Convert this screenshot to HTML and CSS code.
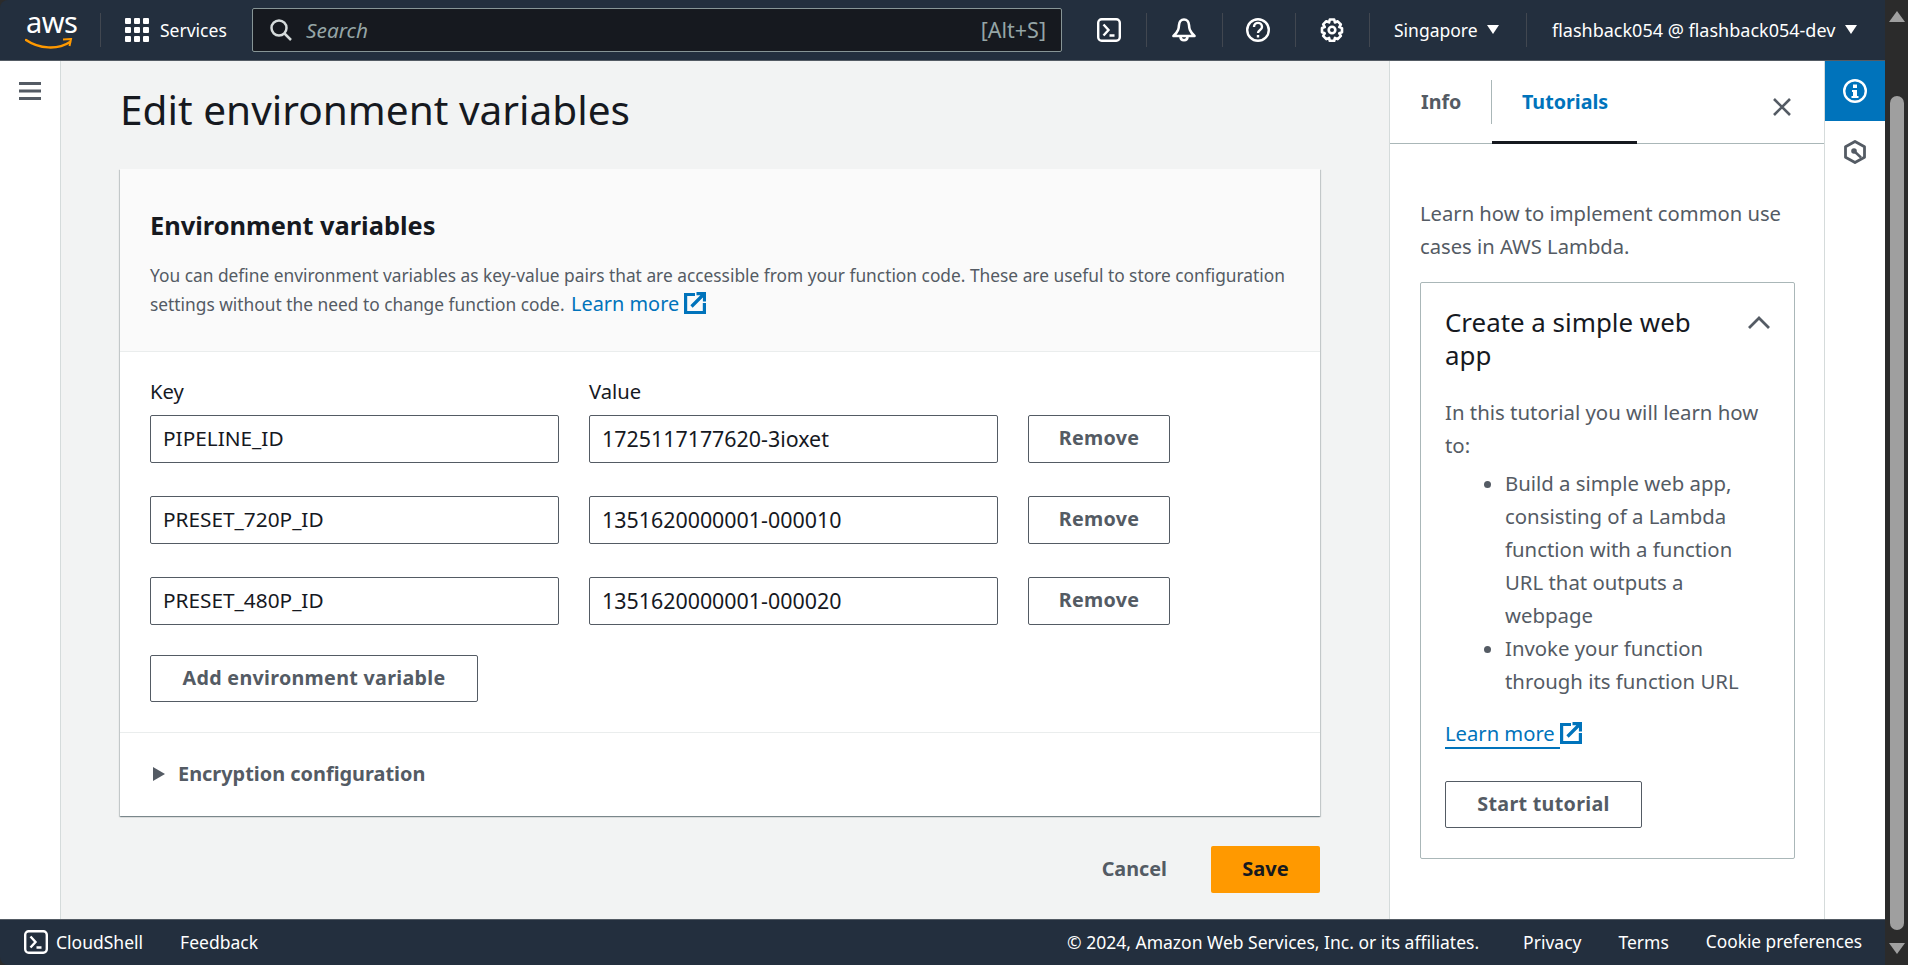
FILE: index.html
```html
<!DOCTYPE html>
<html lang="en">
<head>
<meta charset="utf-8">
<title>Edit environment variables</title>
<link rel="stylesheet" href="styles.css">
</head>
<body>
<div class="window">
  <div class="app">
    <header class="topbar">
      <div class="logo">
        <span class="logo-text">aws</span>
        <svg class="logo-smile" viewBox="0 0 48 14" width="48" height="14"><path d="M1 2c13 9 32 10 44 2" fill="none" stroke="#f90" stroke-width="2.4" stroke-linecap="round"/><path d="M38 1.500l8-.5-1.500 7" fill="none" stroke="#f90" stroke-width="2"/></svg>
      </div>
      <span class="sep sep-logo"></span>
      <svg class="grid-icon" viewBox="0 0 24 24" width="24" height="24" fill="#fff"><rect x="0" y="0" width="6" height="6" rx="1"/><rect x="9" y="0" width="6" height="6" rx="1"/><rect x="18" y="0" width="6" height="6" rx="1"/><rect x="0" y="9" width="6" height="6" rx="1"/><rect x="9" y="9" width="6" height="6" rx="1"/><rect x="18" y="9" width="6" height="6" rx="1"/><rect x="0" y="18" width="6" height="6" rx="1"/><rect x="9" y="18" width="6" height="6" rx="1"/><rect x="18" y="18" width="6" height="6" rx="1"/></svg>
      <span class="top-text services">Services</span>
      <div class="search">
        <svg viewBox="0 0 22 22" width="22" height="22" fill="none" stroke="#d5dbdb" stroke-width="2.500"><circle cx="9" cy="9" r="7.500"/><path d="M14.500 14.500L21 21"/></svg>
        <span class="search-text">Search</span>
        <span class="search-key">[Alt+S]</span>
      </div>
      <svg class="ic ic-term" viewBox="0 0 24 24" width="24" height="24" fill="none" stroke="#fff" stroke-width="2.400"><rect x="1.200" y="1.200" width="21.600" height="21.600" rx="3.500"/><path d="M6.500 6.500l5 5.500-5 5.500M12.500 17.500h5"/></svg>
      <span class="sep sep-a"></span>
      <svg class="ic ic-bell" viewBox="0 0 24 24" width="24" height="24" fill="none" stroke="#fff" stroke-width="2.600" stroke-linejoin="round"><path d="M12 1.500c-3 0-4.800 2.500-5 5.500-.2 3.500-.5 6-5.500 11h21c-5-5-5.300-7.500-5.500-11-.2-3-2-5.500-5-5.500z"/><path d="M8.500 18.500c0 5 7 5 7 0"/></svg>
      <span class="sep sep-b"></span>
      <svg class="ic ic-help" viewBox="0 0 24 24" width="24" height="24" fill="none" stroke="#fff" stroke-width="2.400"><circle cx="12" cy="12" r="10.800"/><path d="M8 9c0-5.500 8-5.500 8 0 0 3-4 3-4 6"/><path d="M12 17v2.500"/></svg>
      <span class="sep sep-c"></span>
      <svg class="ic ic-gear" viewBox="0 0 24 24" width="24" height="24" fill="none" stroke="#fff" stroke-width="2.600" stroke-linejoin="round"><path d="M9.800 1.500h4.400l.7 3 2.800-1.200 3.100 3.200-1.500 2.600 2.700 1v4.200l-2.700 1 1.500 2.600-3.100 3.200-2.800-1.200-.7 3H9.800l-.7-3-2.800 1.200-3.100-3.200 1.500-2.600-2.700-1V10l2.700-1-1.500-2.600 3.100-3.200 2.800 1.200z"/><circle cx="12" cy="12" r="3.300"/></svg>
      <span class="sep sep-d"></span>
      <span class="top-text region">Singapore</span>
      <span class="caret caret-region"></span>
      <span class="sep sep-e"></span>
      <span class="top-text account">flashback054 @ flashback054-dev</span>
      <span class="caret caret-account"></span>
    </header>

    <div class="middle">
      <nav class="leftnav">
        <svg viewBox="0 0 22 18" width="22" height="18" fill="#545b64"><rect width="22" height="3"/><rect y="7.500" width="22" height="3"/><rect y="15" width="22" height="3"/></svg>
      </nav>

      <main class="main">
        <h1 class="page-title">Edit environment variables</h1>
        <section class="card">
          <div class="card-head">
            <h2 class="card-title">Environment variables</h2>
            <p class="card-desc">You can define environment variables as key-value pairs that are accessible from your function code. These are useful to store configuration settings without the need to change function code. <a class="link link-big">Learn more <svg class="ext" viewBox="0 0 22 22" width="22" height="22" fill="none" stroke="#0073bb" stroke-width="3.200"><path d="M11 2.500H1.600v18h18.800V11"/><path d="M7.500 14.500L19.500 2.500M12.500 1.600h8v8"/></svg></a></p>
          </div>
          <div class="card-body">
            <div class="kv-grid">
              <label class="kv-label">Key</label>
              <label class="kv-label">Value</label>
              <span></span>
              <input class="field" value="PIPELINE_ID">
              <input class="field field-num" value="1725117177620-3ioxet">
              <button class="btn">Remove</button>
              <input class="field" value="PRESET_720P_ID">
              <input class="field field-num" value="1351620000001-000010">
              <button class="btn">Remove</button>
              <input class="field" value="PRESET_480P_ID">
              <input class="field field-num" value="1351620000001-000020">
              <button class="btn">Remove</button>
            </div>
            <button class="btn btn-add">Add environment variable</button>
          </div>
          <div class="card-foot">
            <span class="tri"></span>
            <span class="enc">Encryption configuration</span>
          </div>
        </section>
        <div class="actions">
          <span class="cancel">Cancel</span>
          <button class="save">Save</button>
        </div>
      </main>

      <aside class="panel">
        <div class="panel-head">
          <span class="tab tab-info">Info</span>
          <span class="tab tab-tut">Tutorials</span>
          <svg class="close" viewBox="0 0 20 20" width="20" height="20" fill="none" stroke="#545b64" stroke-width="2.600"><path d="M2 2l16 16M18 2L2 18"/></svg>
        </div>
        <div class="panel-body">
          <p class="intro">Learn how to implement common use cases in AWS Lambda.</p>
          <div class="tut">
            <div class="tut-head">
              <h3 class="tut-title">Create a simple web app</h3>
              <svg class="chev" viewBox="0 0 24 14" width="24" height="14" fill="none" stroke="#545b64" stroke-width="2.800"><path d="M2 12L12 2l10 10"/></svg>
            </div>
            <p class="tut-text">In this tutorial you will learn how to:</p>
            <ul class="tut-list">
              <li>Build a simple web app, consisting of a Lambda function with a function URL that outputs a webpage</li>
              <li>Invoke your function through its function URL</li>
            </ul>
            <p class="tut-link"><a class="link link-under">Learn more </a><svg class="ext" viewBox="0 0 22 22" width="22" height="22" fill="none" stroke="#0073bb" stroke-width="3.200"><path d="M11 2.500H1.600v18h18.800V11"/><path d="M7.500 14.500L19.500 2.500M12.500 1.600h8v8"/></svg></p>
            <button class="btn btn-start">Start tutorial</button>
          </div>
        </div>
      </aside>

      <div class="rail">
        <div class="rail-active">
          <svg viewBox="0 0 24 24" width="24" height="24"><circle cx="12" cy="12" r="10.800" fill="none" stroke="#fff" stroke-width="2.400"/><rect x="10" y="5.500" width="4" height="3.500" fill="#fff"/><path d="M9 11h5v6h1.500v2h-7v-2H10v-4H9z" fill="#fff"/></svg>
        </div>
        <div class="rail-item">
          <svg viewBox="0 0 24 24" width="24" height="24" fill="none" stroke="#545b64" stroke-width="2.800" stroke-linejoin="round"><path d="M12 1.500l9.500 5.200v10.600L12 22.500l-9.500-5.200V6.700z"/><circle cx="11" cy="11" r="2.800" fill="#545b64" stroke="none"/><path d="M11 11l7 6.500" stroke-width="2.400"/></svg>
        </div>
      </div>
    </div>

    <footer class="bottombar">
      <svg class="cs-icon" viewBox="0 0 24 24" width="24" height="24" fill="none" stroke="#fff" stroke-width="2.400"><rect x="1.200" y="1.200" width="21.600" height="21.600" rx="3.500"/><path d="M6.500 6.500l5 5.500-5 5.500M12.500 17.500h5"/></svg>
      <span class="bot-text cs-text">CloudShell</span>
      <span class="bot-text feedback">Feedback</span>
      <span class="bot-text copy">© 2024, Amazon Web Services, Inc. or its affiliates.</span>
      <span class="bot-text privacy">Privacy</span>
      <span class="bot-text terms">Terms</span>
      <span class="bot-text cookie">Cookie preferences</span>
    </footer>
  </div>

  <div class="scrollbar">
    <span class="sb-up"></span>
    <span class="sb-thumb"></span>
    <span class="sb-down"></span>
  </div>
</div>
</body>
</html>
```
FILE: styles.css
```css
* { box-sizing: border-box; }
html, body { margin: 0; height: 100%; background: #2b2b2b; overflow: hidden; }
body { font-family: "Noto Sans", "Open Sans", sans-serif; color: #16191f; font-size: 18px; }
h1, h2, h3, p, ul { margin: 0; padding: 0; }

.window { display: flex; width: 1908px; height: 965px; }
.app { width: 1885px; display: flex; flex-direction: column; border-radius: 8px 0 0 8px; overflow: hidden; }

.topbar { height: 61px; flex: none; background: #232f3e; border-bottom: 1px solid #545b64; display: flex; align-items: center; color: #fff; padding: 0 0 1px 26px; }
.logo { width: 47px; height: 44px; position: relative; flex: none; }
.logo-text { display: block; font-size: 29px; line-height: 30px; text-align: center; letter-spacing: -.5px; color: #fff; margin-top: -1px; }
.logo-smile { position: absolute; left: -1px; bottom: 0; }
.sep { width: 1px; height: 34px; background: #414750; flex: none; }
.sep-logo { margin-left: 27px; }
.grid-icon { margin-left: 24px; flex: none; }
.top-text { font-size: 17.500px; white-space: nowrap; line-height: 24px; }
.services { margin-left: 11px; width: 67px; }
.search { margin-left: 25px; width: 810px; height: 44px; background: #16191f; border: 1px solid #879596; border-radius: 2px; display: flex; align-items: center; padding: 0 15px 0 17px; }
.search-text { margin-left: 14px; font-size: 20.800px; font-style: italic; color: #95a5a6; }
.search-key { margin-left: auto; font-size: 21.500px; color: #95a5a6; }
.ic { flex: none; }
.ic-term { margin-left: 35px; }
.sep-a { margin-left: 25px; }
.ic-bell { margin-left: 25px; }
.sep-b { margin-left: 26px; }
.ic-help { margin-left: 23px; }
.sep-c { margin-left: 25px; }
.ic-gear { margin-left: 24px; }
.sep-d { margin-left: 25px; }
.region { margin-left: 24px; width: 83px; }
.caret { width: 0; height: 0; border-left: 6px solid transparent; border-right: 6px solid transparent; border-top: 9px solid #fff; flex: none; }
.caret-region { margin-left: 10px; }
.sep-e { margin-left: 27px; }
.account { margin-left: 25px; width: 285px; font-size: 18px; }
.caret-account { margin-left: 8px; }

.middle { flex: 1; min-height: 0; display: flex; }
.leftnav { width: 61px; flex: none; background: #fff; border-right: 1px solid #d5dbdb; padding: 21px 0 0 19px; }
.leftnav svg { display: block; }

.main { width: 1328px; flex: none; background: #f2f3f3; padding: 24px 69px 0 59px; }
.page-title { font-size: 40.600px; font-weight: 400; line-height: 50px; white-space: nowrap; }
.card { margin-top: 34px; background: #fff; box-shadow: 0 1px 1px 0 rgba(0,28,36,.3), 1px 1px 1px 0 rgba(0,28,36,.15), -1px 1px 1px 0 rgba(0,28,36,.15); }
.card-head { background: #fafafa; border-bottom: 1px solid #eaeded; padding: 39px 30px 0; height: 183px; }
.card-title { font-size: 25.400px; font-weight: 700; line-height: 34px; }
.card-desc { margin-top: 19px; font-size: 17.330px; line-height: 29px; color: #545b64; }
.link { color: #0073bb; }
.link-big { font-size: 19.900px; line-height: 20px; margin-left: 2px; }
.ext { vertical-align: -3px; }
.card-body { padding: 27px 30px 30px; border-bottom: 1px solid #eaeded; }
.kv-grid { display: grid; grid-template-columns: 409px 409px 142px; column-gap: 30px; row-gap: 33px; }
.kv-label { font-size: 20.200px; line-height: 24px; margin-bottom: -21px; }
.field { height: 48px; width: 100%; border: 1px solid #545b64; border-radius: 2px; padding: 0 12px 2px; font: 20.800px "Noto Sans", sans-serif; color: #16191f; background: #fff; }
.field-num { font-size: 21.400px; }
.btn { height: 48px; background: #fff; border: 1px solid #545b64; border-radius: 2px; font: 700 19.700px "Noto Sans", sans-serif; color: #545b64; padding: 0 0 3px; letter-spacing: .3px; }
.btn-add { display: block; margin-top: 30px; width: 328px; height: 47px; }
.card-foot { height: 83px; display: flex; align-items: center; padding: 0 0 2px 33px; }
.tri { width: 0; height: 0; border-top: 7px solid transparent; border-bottom: 7px solid transparent; border-left: 12px solid #545b64; }
.enc { margin-left: 13px; font-size: 19.900px; font-weight: 700; color: #545b64; }
.actions { margin-top: 30px; display: flex; justify-content: flex-end; align-items: center; }
.cancel { font-size: 19.800px; font-weight: 700; color: #545b64; padding-bottom: 2px; }
.save { margin-left: 44px; width: 109px; height: 47px; background: #f90; border: 0; border-radius: 2px; font: 700 20px "Noto Sans", sans-serif; color: #16191f; padding: 0 0 3px; }

.panel { width: 435px; flex: none; background: #fff; border-left: 1px solid #d5dbdb; }
.panel-head { height: 83px; border-bottom: 1px solid #aab7b8; display: flex; position: relative; }
.tab { font-size: 19.700px; font-weight: 700; line-height: 44px; }
.tab-info { width: 102px; margin-top: 19px; height: 44px; padding-left: 31px; color: #545b64; border-right: 1px solid #aab7b8; }
.tab-tut { width: 145px; padding: 19px 0 0 30px; color: #0073bb; border-bottom: 3px solid #16191f; height: 83px; }
.close { position: absolute; left: 382px; top: 36px; }
.panel-body { padding: 53px 30px 0; }
.intro { font-size: 20.200px; line-height: 33px; color: #545b64; }
.tut { margin-top: 19px; height: 577px; width: 375px; border: 1px solid #aab7b8; border-radius: 2px; padding: 23px 25px 0 24px; }
.tut-head { display: flex; justify-content: space-between; }
.tut-title { width: 270px; font-size: 25.900px; font-weight: 400; line-height: 33px; }
.chev { margin: 10px -2px 0 0; }
.tut-text { margin-top: 24px; font-size: 20.400px; line-height: 33px; color: #545b64; }
.tut-list { margin-top: 5px; padding-left: 60px; font-size: 20.350px; line-height: 33px; color: #545b64; }
.tut-link { margin-top: 19px; font-size: 20.200px; line-height: 33px; }
.link-under { text-decoration: none; border-bottom: 2px solid #0073bb; white-space: pre; }
.btn-start { display: block; margin-top: 31px; width: 197px; height: 47px; }

.rail { width: 61px; flex: none; background: #fff; border-left: 1px solid #d5dbdb; }
.rail-active { height: 60px; background: #0073bb; display: flex; align-items: center; justify-content: center; }
.rail-item { height: 61px; display: flex; align-items: center; justify-content: center; }

.bottombar { height: 46px; flex: none; background: #232f3e; border-top: 1px solid #545b64; display: flex; align-items: center; color: #fff; padding: 0 0 2px 24px; }
.bot-text { font-size: 17.500px; white-space: nowrap; }
.cs-text { margin-left: 8px; }
.feedback { margin-left: 37px; }
.copy { margin-left: auto; }
.privacy { margin-left: 44px; }
.terms { margin-left: 37px; }
.cookie { margin-left: 37px; margin-right: 23px; font-size: 17.300px; }

.scrollbar { width: 23px; flex: none; background: #2b2b2b; display: flex; flex-direction: column; align-items: center; }
.sb-up { margin-top: 11px; width: 0; height: 0; border-left: 8px solid transparent; border-right: 8px solid transparent; border-bottom: 11px solid #a0a0a0; }
.sb-thumb { margin-top: 74px; width: 14px; height: 834px; background: #9f9f9f; border-radius: 7px; }
.sb-down { margin-top: 13px; width: 0; height: 0; border-left: 8px solid transparent; border-right: 8px solid transparent; border-top: 11px solid #a0a0a0; }
```
